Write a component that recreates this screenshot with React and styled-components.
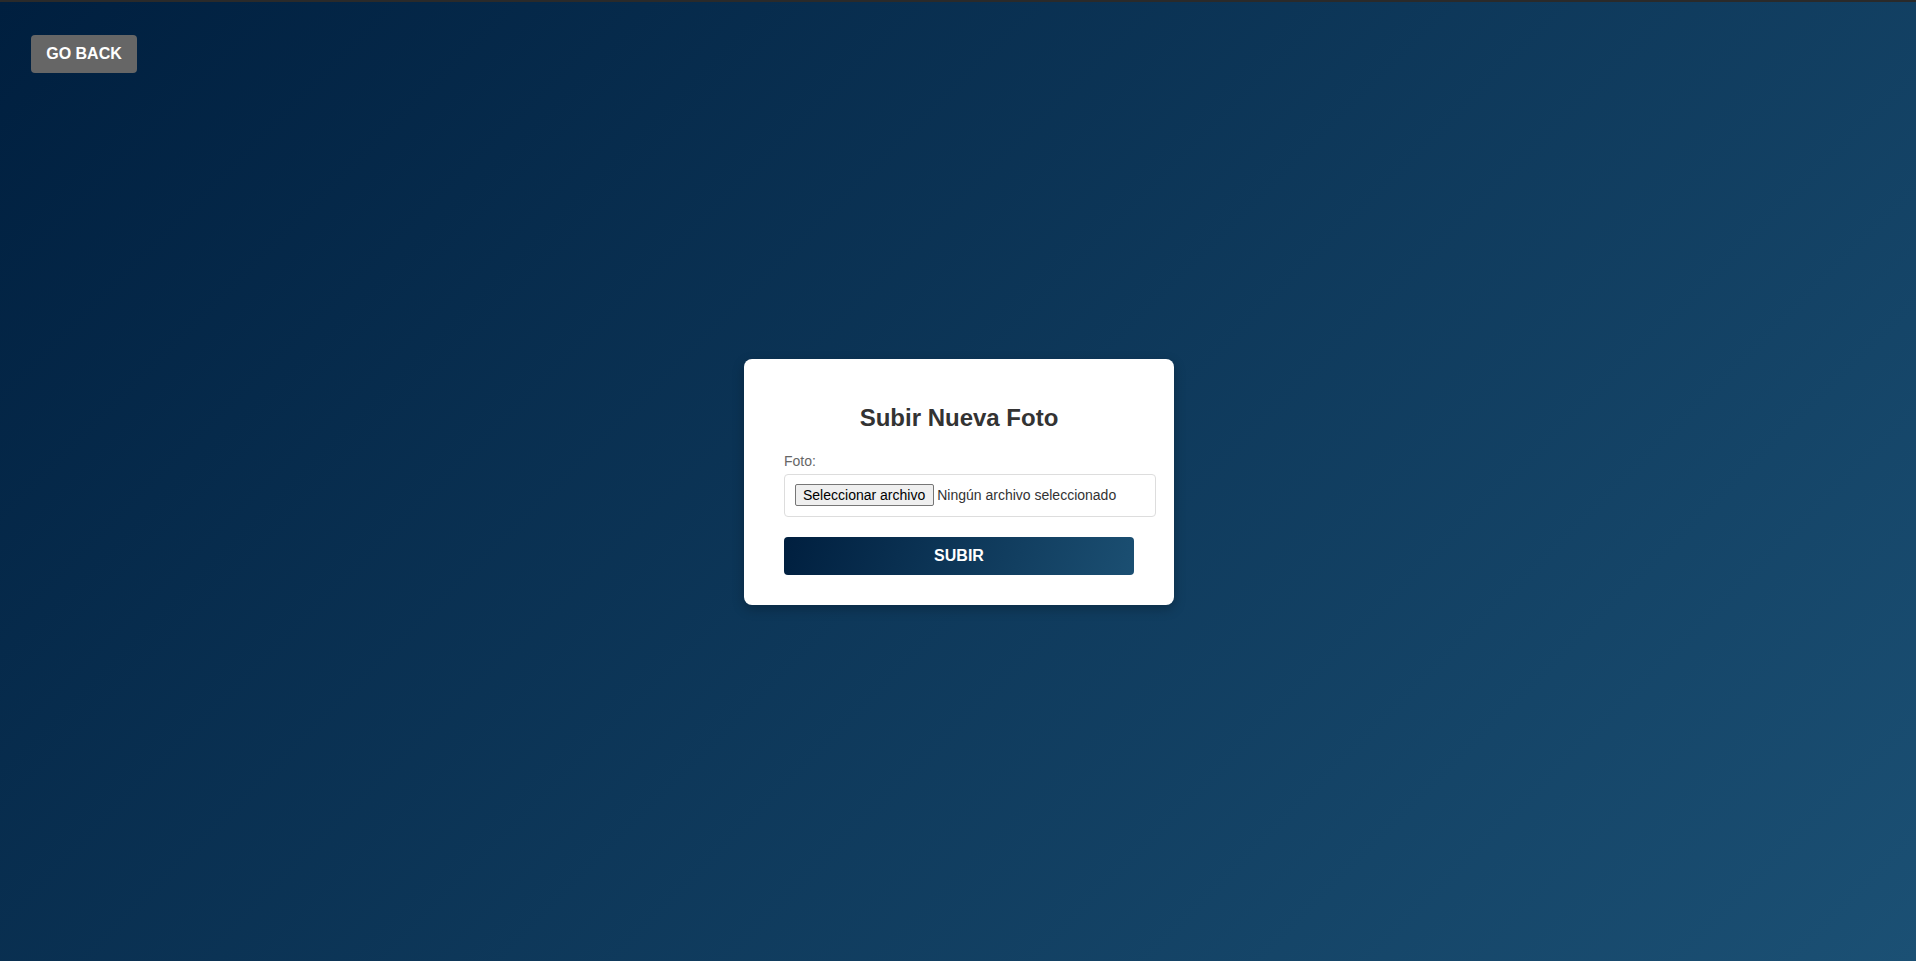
import React, { useState } from "react";
import styled, { createGlobalStyle } from "styled-components";

const Global = createGlobalStyle`
  html, body { margin: 0; padding: 0; }
  body { font-family: "Liberation Sans", Arial, sans-serif; }
  * { box-sizing: content-box; }
`;

const Page = styled.div`
  position: relative;
  height: 959px;
  overflow: hidden;
  border-top: 2px solid #2a2a2a;
  background: linear-gradient(135deg, #001f3f 0%, #1b5074 100%);
  display: flex;
  align-items: center;
  justify-content: center;
`;

const BackButton = styled.button`
  position: absolute;
  top: 33px;
  left: 31px;
  width: 106px;
  height: 38px;
  padding: 0;
  border: none;
  border-radius: 4px;
  background: #666666;
  color: #ffffff;
  font-family: "Liberation Sans", Arial, sans-serif;
  font-weight: bold;
  font-size: 16px;
  cursor: pointer;
`;

const Card = styled.div`
  width: 350px;
  padding: 30px 40px;
  background: #ffffff;
  border-radius: 8px;
  box-shadow: 0 4px 12px rgba(0, 0, 0, 0.25);
  margin-left: 2px;
`;

const Title = styled.h2`
  margin: 15px 0 21px;
  text-align: center;
  color: #333333;
  font-size: 24px;
  font-weight: bold;
`;

const Label = styled.label`
  display: block;
  margin-bottom: 5px;
  color: #666666;
  font-size: 14px;
`;

const FileBox = styled.div`
  width: 350px;
  height: 21px;
  padding: 10px;
  border: 1px solid #dddddd;
  border-radius: 4px;
  display: flex;
  align-items: center;
  gap: 3px;
  font-size: 14px;
  color: #333333;
`;

const HiddenInput = styled.input`
  display: none;
`;

const PickButton = styled.label`
  height: 20px;
  padding: 0 8px 0 7px;
  display: inline-flex;
  align-items: center;
  background: #efefef;
  border: 1px solid #767676;
  border-radius: 2px;
  color: #000000;
  font-size: 14px;
  cursor: pointer;
`;

const FileName = styled.span`
  white-space: nowrap;
`;

const Submit = styled.button`
  display: block;
  width: 350px;
  height: 38px;
  margin-top: 20px;
  padding: 0;
  border: none;
  border-radius: 4px;
  background: linear-gradient(110deg, #001f3f 0%, #1b4f72 100%);
  color: #ffffff;
  font-family: "Liberation Sans", Arial, sans-serif;
  font-weight: bold;
  font-size: 16px;
  cursor: pointer;
`;

export default function App() {
  const [name, setName] = useState("Ningún archivo seleccionado");
  return (
    <>
      <Global />
      <Page>
        <BackButton>GO BACK</BackButton>
        <Card>
          <Title>Subir Nueva Foto</Title>
          <Label htmlFor="foto">Foto:</Label>
          <FileBox>
            <PickButton htmlFor="foto">Seleccionar archivo</PickButton>
            <HiddenInput
              id="foto"
              type="file"
              onChange={(e) =>
                setName(e.target.files[0] ? e.target.files[0].name : "Ningún archivo seleccionado")
              }
            />
            <FileName>{name}</FileName>
          </FileBox>
          <Submit>SUBIR</Submit>
        </Card>
      </Page>
    </>
  );
}
